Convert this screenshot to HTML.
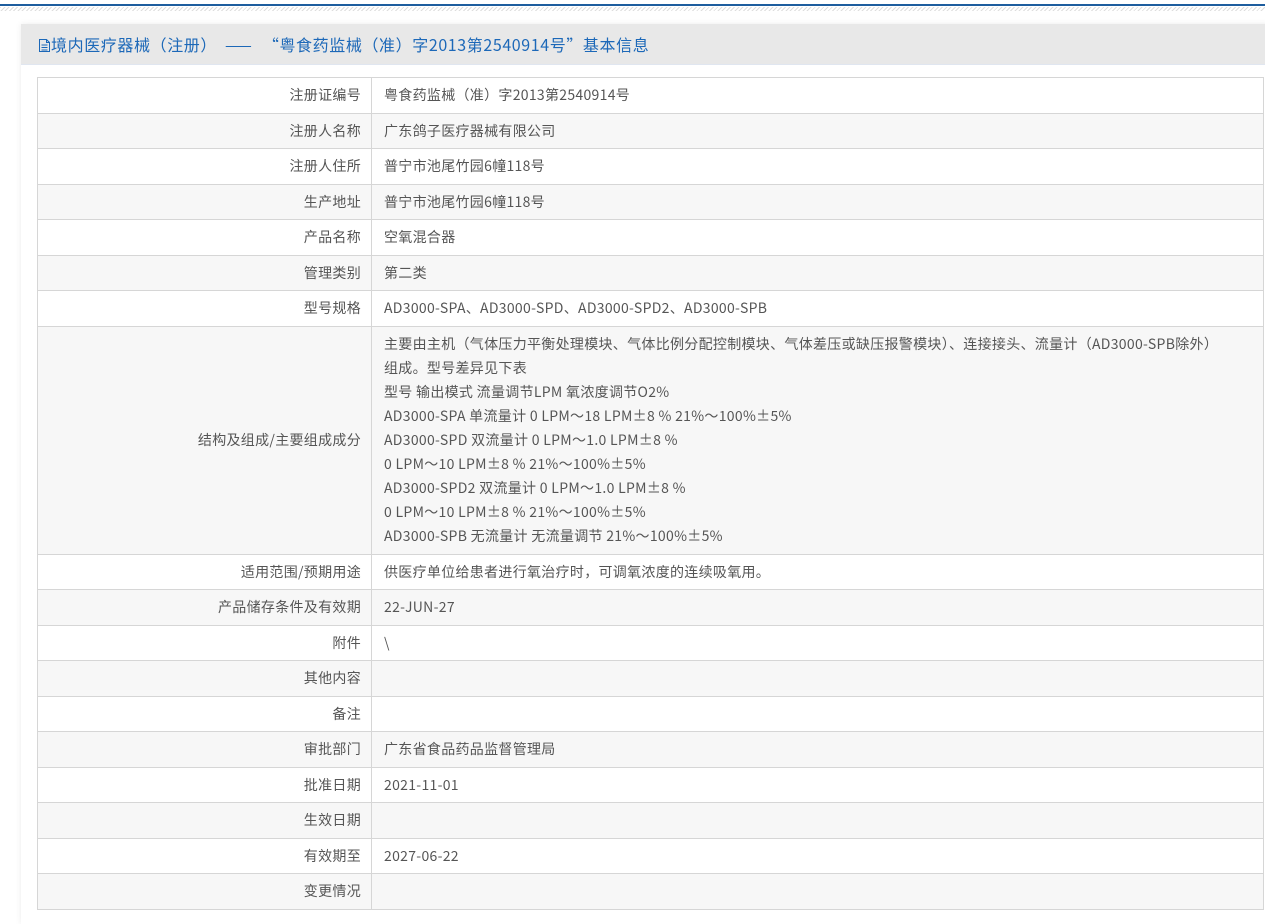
<!DOCTYPE html>
<html><head><meta charset="utf-8"><style>
html,body{margin:0;padding:0;background:#fff;width:1265px;height:911px;overflow:hidden;font-family:"Noto Sans CJK SC","Liberation Sans",sans-serif;}
.topline{position:absolute;left:0;top:4px;width:1265px;height:2px;background:#1d5d9e;}
.dash{position:absolute;left:0;top:7px;width:1265px;height:4px;background:repeating-linear-gradient(135deg,#ddd 0 1px,transparent 1px 3px);}
.panel{position:absolute;left:21px;top:24px;width:1250px;height:900px;background:#fff;box-shadow:0 0 6px rgba(0,0,0,.08);}
.hd{height:40px;background:#e8e8e8;border-bottom:1px solid #e0e6f0;color:#1c68b8;font-size:16px;line-height:40px;padding-left:17px;white-space:nowrap;letter-spacing:0.6px;}
.hd .d{letter-spacing:3px;margin:0 8px;}
table{position:absolute;left:16px;top:53px;width:1227px;border-collapse:collapse;font-size:14px;color:#555;letter-spacing:0.3px;}
td{border:1px solid #d6d6d6;height:35.5px;padding:0 12px;box-sizing:border-box;line-height:20px;}
td.l{width:334px;text-align:right;padding-right:10px;}
tr:nth-child(even) td{background:#f7f7f7;}
.big td{line-height:24px;padding-top:5px;padding-bottom:6px;}
</style></head><body>
<div class="topline"></div><div class="dash"></div>
<div class="panel">
<div class="hd"><svg width="13" height="15" viewBox="0 0 13 15" style="vertical-align:-2px"><path d="M1.5 1.5h7l3 3v9h-10z M8.5 1.5v3h3 M3.5 7h6 M3.5 9.5h6 M3.5 12h6" fill="none" stroke="#1c68b8" stroke-width="1"/></svg>境内医疗器械（注册）<span class="d">——</span>“粤食药监械（准）字2013第2540914号”基本信息</div>
<table>
<tr><td class="l">注册证编号</td><td>粤食药监械（准）字2013第2540914号</td></tr>
<tr><td class="l">注册人名称</td><td>广东鸽子医疗器械有限公司</td></tr>
<tr><td class="l">注册人住所</td><td>普宁市池尾竹园6幢118号</td></tr>
<tr><td class="l">生产地址</td><td>普宁市池尾竹园6幢118号</td></tr>
<tr><td class="l">产品名称</td><td>空氧混合器</td></tr>
<tr><td class="l">管理类别</td><td>第二类</td></tr>
<tr><td class="l">型号规格</td><td>AD3000-SPA、AD3000-SPD、AD3000-SPD2、AD3000-SPB</td></tr>
<tr class="big"><td class="l">结构及组成/主要组成成分</td><td>主要由主机（气体压力平衡处理模块、气体比例分配控制模块、气体差压或缺压报警模块）、连接接头、流量计（AD3000-SPB除外）<br>组成。型号差异见下表<br>型号 输出模式 流量调节LPM 氧浓度调节O2%<br>AD3000-SPA 单流量计 0 LPM～18 LPM±8 % 21%～100%±5%<br>AD3000-SPD 双流量计 0 LPM～1.0 LPM±8 %<br>0 LPM～10 LPM±8 % 21%～100%±5%<br>AD3000-SPD2 双流量计 0 LPM～1.0 LPM±8 %<br>0 LPM～10 LPM±8 % 21%～100%±5%<br>AD3000-SPB 无流量计 无流量调节 21%～100%±5%</td></tr>
<tr><td class="l">适用范围/预期用途</td><td>供医疗单位给患者进行氧治疗时，可调氧浓度的连续吸氧用。</td></tr>
<tr><td class="l">产品储存条件及有效期</td><td>22-JUN-27</td></tr>
<tr><td class="l">附件</td><td>\</td></tr>
<tr><td class="l">其他内容</td><td></td></tr>
<tr><td class="l">备注</td><td></td></tr>
<tr><td class="l">审批部门</td><td>广东省食品药品监督管理局</td></tr>
<tr><td class="l">批准日期</td><td>2021-11-01</td></tr>
<tr><td class="l">生效日期</td><td></td></tr>
<tr><td class="l">有效期至</td><td>2027-06-22</td></tr>
<tr><td class="l">变更情况</td><td></td></tr>
</table>
</div>
</body></html>
